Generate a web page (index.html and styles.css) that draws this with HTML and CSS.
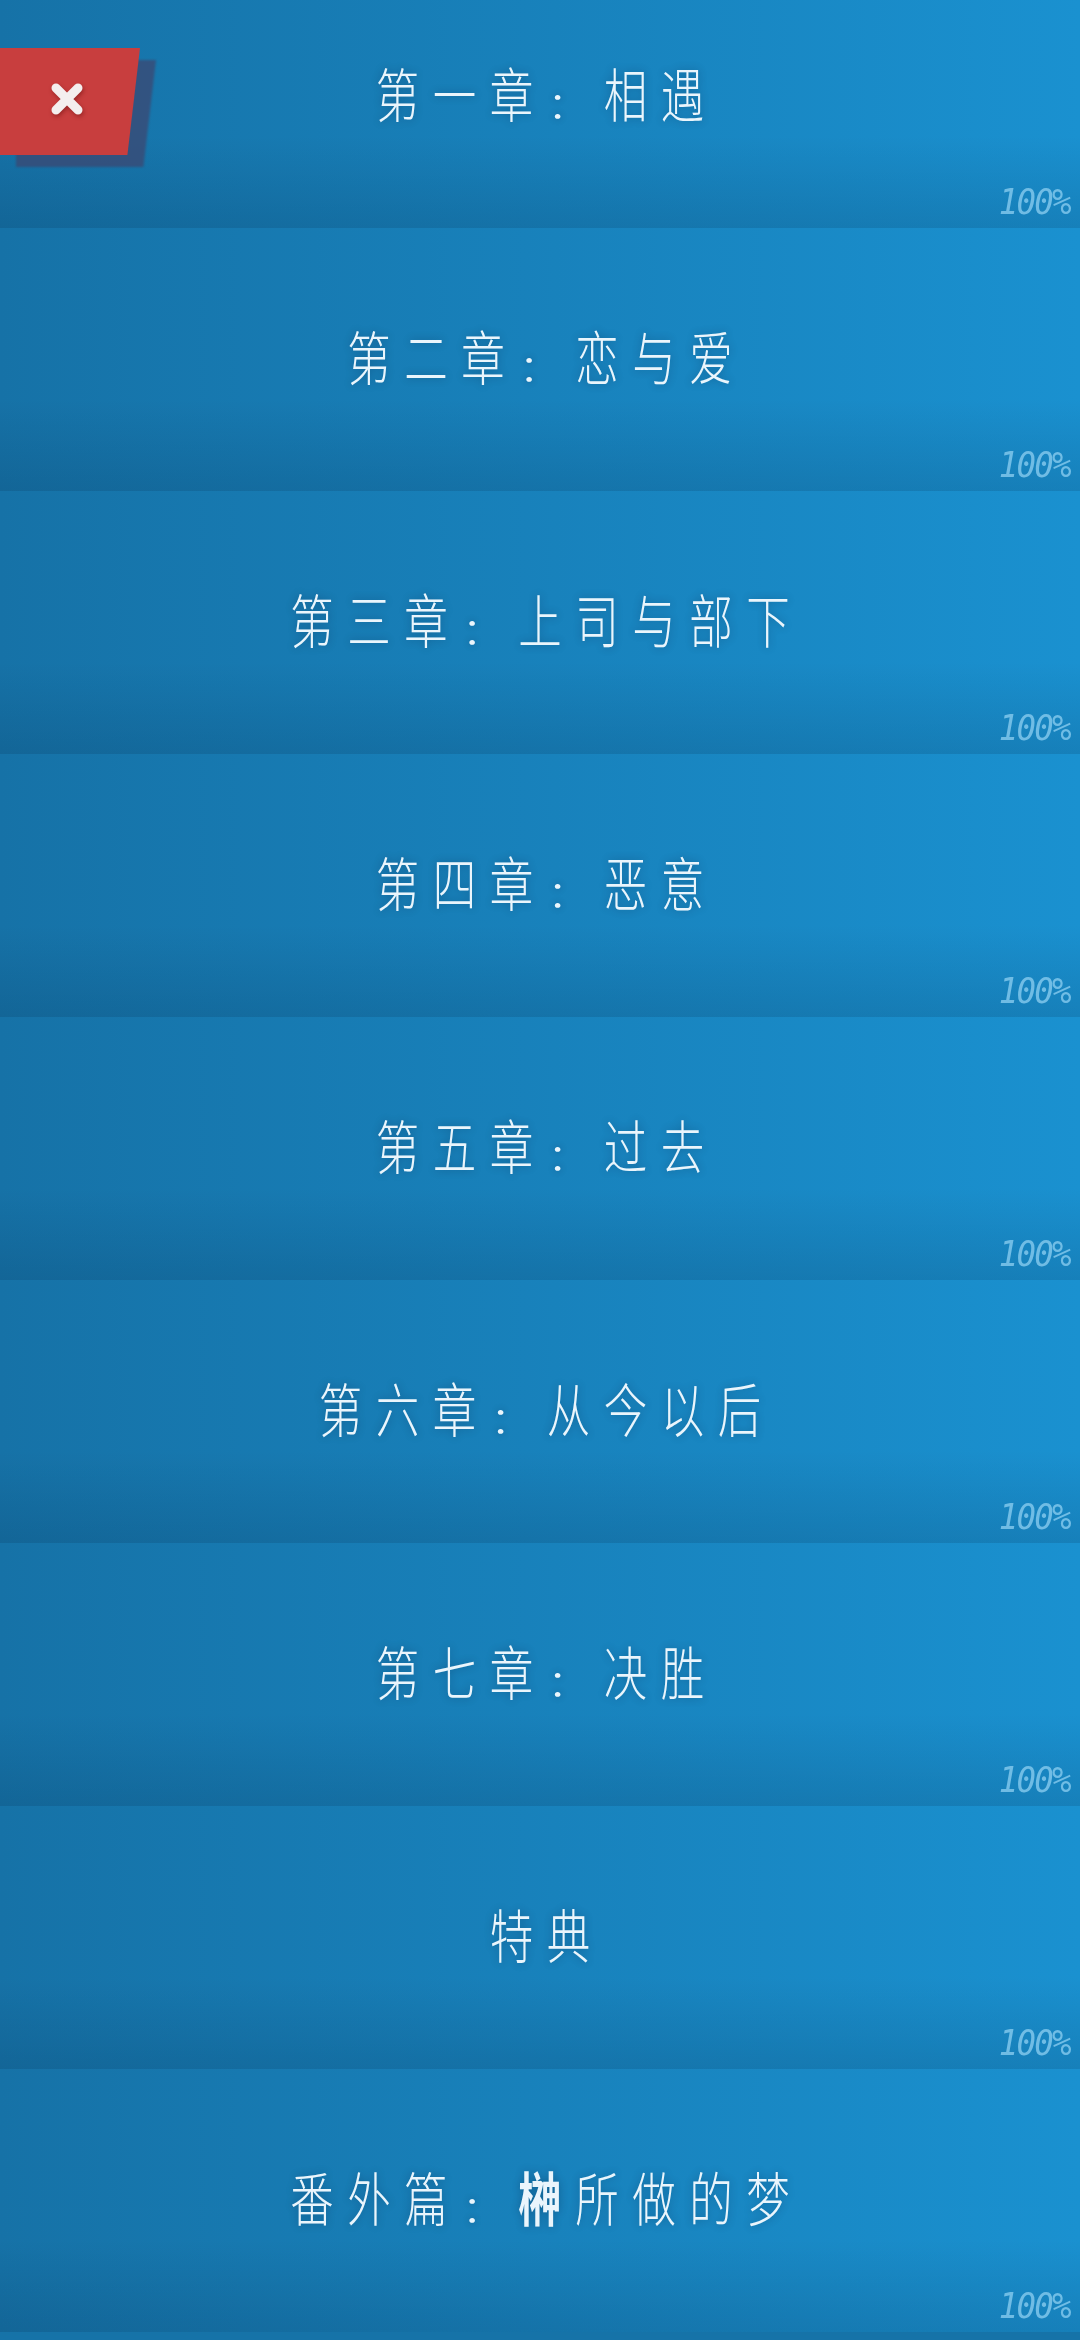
FILE: index.html
```html
<!DOCTYPE html>
<html lang="zh-CN">
<head>
    <meta charset="UTF-8">
    <meta name="viewport" content="width=device-width, initial-scale=1.0">
    <title>章节选择</title>
    <link rel="stylesheet" href="styles.css">
</head>
<body>
<div class="chapter-list">
    <div class="chapter first">
        <span class="chapter-title">第一章<span class="colon">：</span>相遇</span>
        <span class="progress">100%</span>
    </div>
    <div class="chapter">
        <span class="chapter-title">第二章<span class="colon">：</span>恋与爱</span>
        <span class="progress">100%</span>
    </div>
    <div class="chapter">
        <span class="chapter-title">第三章<span class="colon">：</span>上司与部下</span>
        <span class="progress">100%</span>
    </div>
    <div class="chapter">
        <span class="chapter-title">第四章<span class="colon">：</span>恶意</span>
        <span class="progress">100%</span>
    </div>
    <div class="chapter">
        <span class="chapter-title">第五章<span class="colon">：</span>过去</span>
        <span class="progress">100%</span>
    </div>
    <div class="chapter">
        <span class="chapter-title">第六章<span class="colon">：</span>从今以后</span>
        <span class="progress">100%</span>
    </div>
    <div class="chapter">
        <span class="chapter-title">第七章<span class="colon">：</span>决胜</span>
        <span class="progress">100%</span>
    </div>
    <div class="chapter">
        <span class="chapter-title">特典</span>
        <span class="progress">100%</span>
    </div>
    <div class="chapter">
        <span class="chapter-title">番外篇<span class="colon">：</span><b>榊</b>所做的梦</span>
        <span class="progress">100%</span>
    </div>
</div>

<div class="close-wrap">
    <button class="close-button" type="button">
        <svg width="36" height="36" viewBox="0 0 36 36">
            <path d="M7 7 L29 29 M29 7 L7 29" stroke="#f4eeee" stroke-width="9" stroke-linecap="round"/>
        </svg>
    </button>
</div>
</body>
</html>
```

FILE: styles.css
```css
html, body {
    margin: 0;
    padding: 0;
}

body {
    width: 1080px;
    height: 2340px;
    overflow: hidden;
    background-color: #1673a8;
    font-family: "Noto Sans CJK SC", "Noto Sans", sans-serif;
    position: relative;
}

.chapter-list {
    display: flex;
    flex-direction: column;
}

.chapter {
    position: relative;
    height: 263px;
    flex-shrink: 0;
    display: flex;
    align-items: center;
    justify-content: center;
    background:
        linear-gradient(to bottom, rgba(0, 30, 60, 0) 65%, rgba(0, 30, 60, 0.15) 100%),
        linear-gradient(to right, #1672a7, #1a91d0);
}

.chapter.first {
    margin-top: -35px;
}

.chapter-title {
    color: #eaf5fc;
    font-size: 58px;
    font-weight: 300;
    letter-spacing: 18px;
    padding-left: 18px;
    margin-bottom: 10px;
    white-space: nowrap;
    transform: scaleX(0.75);
    text-shadow: 0 0 10px rgba(0, 20, 50, 0.3);
}

.chapter-title b {
    font-weight: 700;
}

/* low, compact full-width colon */
.colon {
    display: inline-block;
    transform: translateY(10px) scaleY(0.65);
}

.progress {
    position: absolute;
    right: 10px;
    bottom: 8px;
    color: #80c7ec;
    font-family: "DejaVu Sans Mono", monospace;
    font-size: 36px;
    font-style: italic;
    letter-spacing: -2px;
    line-height: 36px;
    transform: scaleX(0.9);
    transform-origin: right bottom;
    opacity: 0.85;
}

/* wrapper carries the offset slate shadow of the clipped tab */
.close-wrap {
    position: absolute;
    left: 0;
    top: 48px;
    filter: drop-shadow(16px 12px 1px rgba(62, 68, 110, 0.7));
}

.close-button {
    display: flex;
    align-items: center;
    justify-content: center;
    width: 140px;
    height: 107px;
    border: none;
    padding: 0;
    background-color: #c83e3e;
    clip-path: polygon(0 0, 100% 0, 91% 100%, 0 100%);
    cursor: pointer;
}

.close-button svg {
    margin-left: -6px;
    margin-top: -6px;
    filter: drop-shadow(1px 2px 2px rgba(80, 0, 0, 0.4));
}
```
